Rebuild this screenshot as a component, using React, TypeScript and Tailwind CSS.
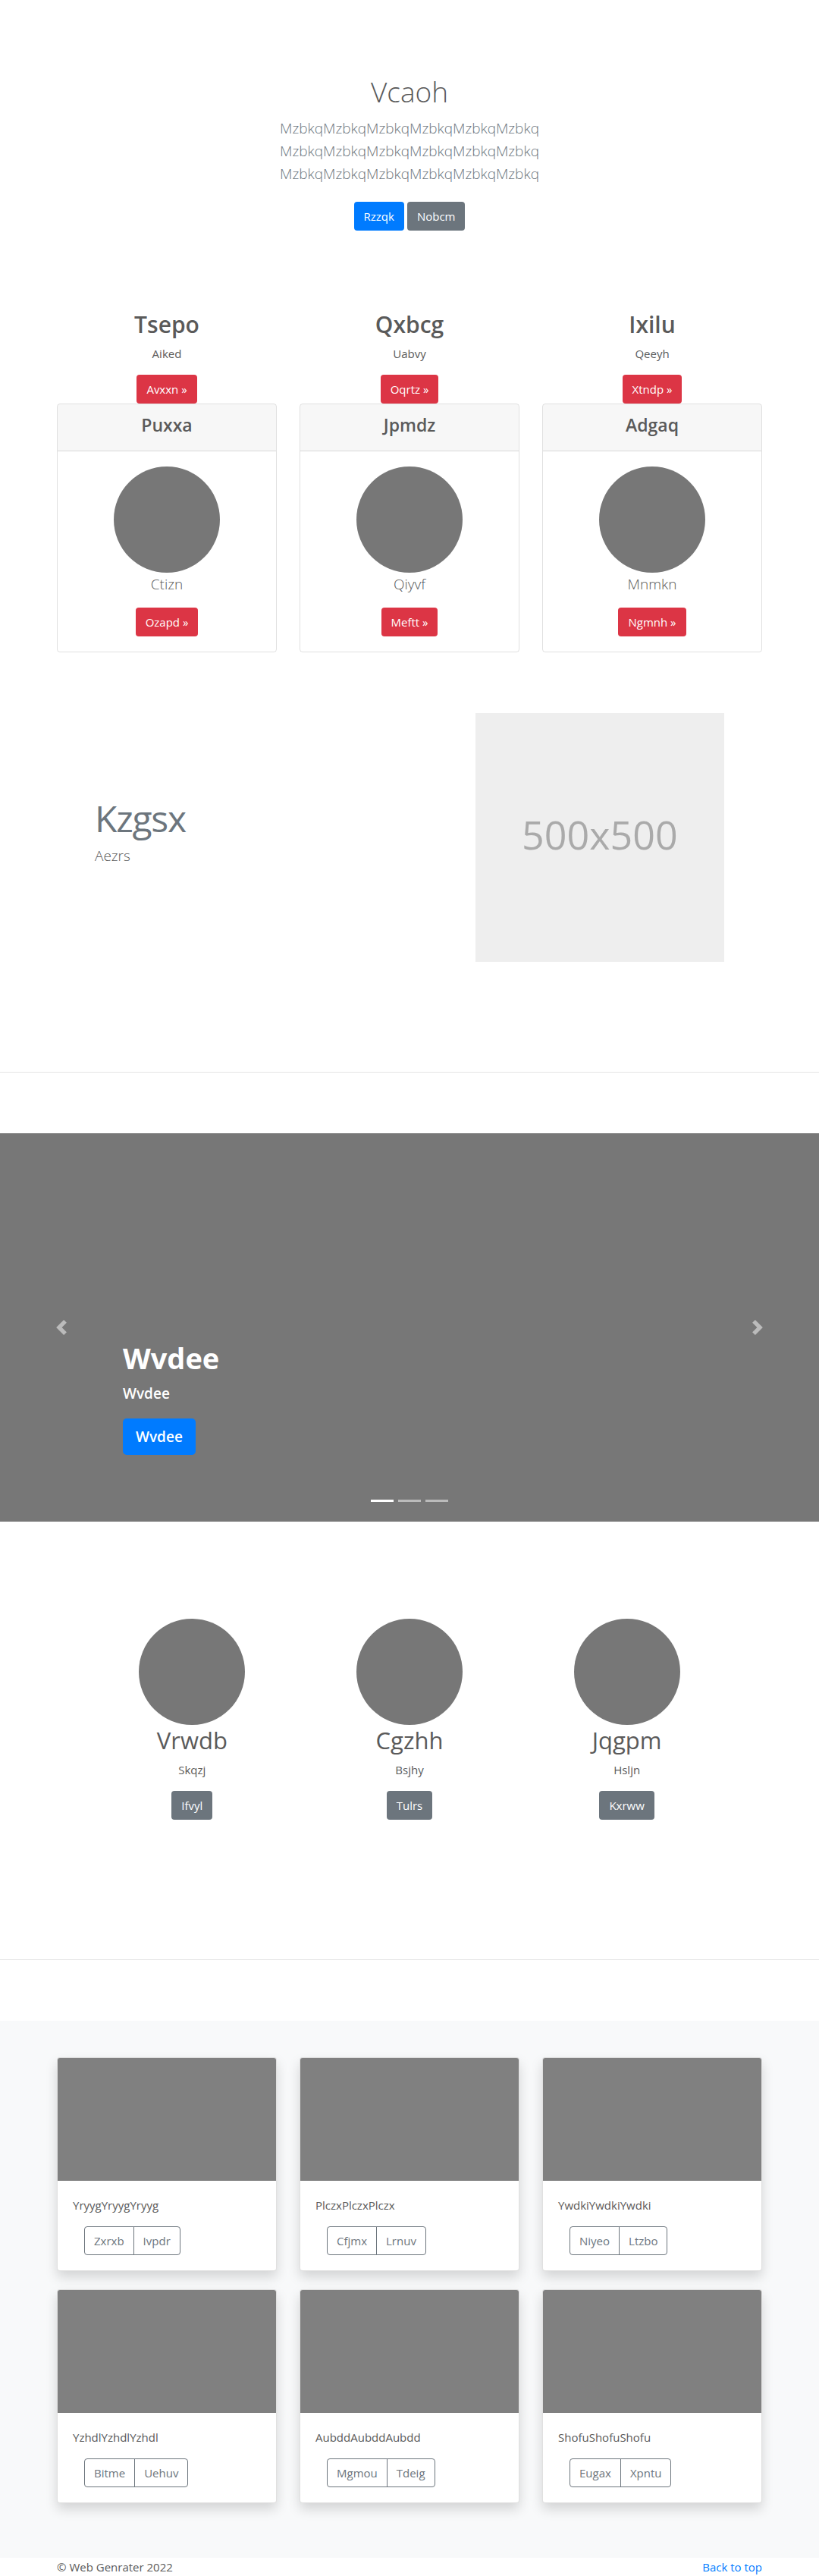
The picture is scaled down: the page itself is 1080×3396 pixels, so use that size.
import React from "react";

const people = [
  { name: "Tsepo", text: "Aiked", action: "Avxxn »" },
  { name: "Qxbcg", text: "Uabvy", action: "Oqrtz »" },
  { name: "Ixilu", text: "Qeeyh", action: "Xtndp »" },
];

const plans = [
  { name: "Puxxa", text: "Ctizn", action: "Ozapd »" },
  { name: "Jpmdz", text: "Qiyvf", action: "Meftt »" },
  { name: "Adgaq", text: "Mnmkn", action: "Ngmnh »" },
];

const features = [
  { name: "Vrwdb", text: "Skqzj", action: "Ifvyl" },
  { name: "Cgzhh", text: "Bsjhy", action: "Tulrs" },
  { name: "Jqgpm", text: "Hsljn", action: "Kxrww" },
];

const albums = [
  { text: "YryygYryygYryyg", left: "Zxrxb", right: "Ivpdr" },
  { text: "PlczxPlczxPlczx", left: "Cfjmx", right: "Lrnuv" },
  { text: "YwdkiYwdkiYwdki", left: "Niyeo", right: "Ltzbo" },
  { text: "YzhdlYzhdlYzhdl", left: "Bitme", right: "Uehuv" },
  { text: "AubddAubddAubdd", left: "Mgmou", right: "Tdeig" },
  { text: "ShofuShofuShofu", left: "Eugax", right: "Xpntu" },
];

const tones = {
  primary: "bg-[#007bff] hover:bg-[#0069d9]",
  secondary: "bg-[#6c757d] hover:bg-[#5a6268]",
  danger: "bg-[#dc3545] hover:bg-[#c82333]",
};

function LinkButton({ tone, children }: { tone: keyof typeof tones; children: React.ReactNode }) {
  return (
    <a href="#" className={`inline-block rounded px-[13px] py-[7px] leading-6 text-white ${tones[tone]}`}>
      {children}
    </a>
  );
}

function Container({ className = "", children }: { className?: string; children: React.ReactNode }) {
  return <div className={`mx-auto w-full max-w-[960px] px-[15px] ${className}`}>{children}</div>;
}

function Divider() {
  return <hr className="my-20 border-t border-black/10" />;
}

function Circle() {
  return <div className="size-[140px] rounded-full bg-[#777]" />;
}

function Hero() {
  const line = "MzbkqMzbkqMzbkqMzbkqMzbkqMzbkq";
  return (
    <section className="flex flex-col items-center px-4 py-24 text-center">
      <h1 className="text-[37px] leading-[50px] font-light">Vcaoh</h1>
      <p className="mt-2 text-[19px] leading-[30px] font-light text-[#6c757d]">
        {line}
        <br />
        {line}
        <br />
        {line}
      </p>
      <div className="mt-[22px] mb-2 flex gap-1">
        <LinkButton tone="primary">Rzzqk</LinkButton>
        <LinkButton tone="secondary">Nobcm</LinkButton>
      </div>
    </section>
  );
}

function People() {
  return (
    <div className="grid grid-cols-1 gap-x-[30px] md:grid-cols-3">
      {people.map((p) => (
        <div key={p.name} className="flex flex-col items-center">
          <h2 className="mb-1.5 text-[30px] leading-[40px] font-semibold">{p.name}</h2>
          <p className="mb-4">{p.text}</p>
          <LinkButton tone="danger">{p.action}</LinkButton>
        </div>
      ))}
    </div>
  );
}

function Plans() {
  return (
    <div className="grid grid-cols-1 gap-x-[30px] md:grid-cols-3">
      {plans.map((p) => (
        <article key={p.name} className="overflow-hidden rounded border border-black/12 text-center">
          <header className="border-b border-black/12 bg-black/3 px-5 py-3">
            <h4 className="mb-1.5 text-[23px] leading-[31px] font-semibold">{p.name}</h4>
          </header>
          <div className="flex flex-col items-center p-5">
            <Circle />
            <p className="mb-4 text-[19px] leading-[30px] font-light">{p.text}</p>
            <LinkButton tone="danger">{p.action}</LinkButton>
          </div>
        </article>
      ))}
    </div>
  );
}

function Featurette() {
  return (
    <Container className="mt-20 pb-[65px]">
      <div className="grid grid-cols-1 items-center gap-[30px] px-[50px] md:grid-cols-12">
        <div className="md:col-span-7">
          <h2 className="mb-2 text-[48px] leading-[52px] tracking-tight text-[#6c757d]">Kzgsx</h2>
          <p className="mb-3 text-[19px] leading-[30px] font-light">Aezrs</p>
        </div>
        <div className="flex aspect-square items-center justify-center bg-[#eee] pb-2 text-[52px] leading-none text-[#aaa] md:col-span-5">
          500x500
        </div>
      </div>
    </Container>
  );
}

function Chevron({ d }: { d: string }) {
  return (
    <svg viewBox="0 0 8 8" className="size-5 fill-white opacity-50" aria-hidden="true">
      <path d={d} />
    </svg>
  );
}

function Carousel() {
  return (
    <section className="relative h-[512px] bg-[#777] text-white" aria-label="Carousel">
      <button type="button" aria-label="Previous" className="absolute inset-y-0 left-0 flex w-[15%] items-center justify-center">
        <Chevron d="M5.25 0l-4 4 4 4 1.5-1.5L4.25 4l2.5-2.5L5.25 0z" />
      </button>
      <button type="button" aria-label="Next" className="absolute inset-y-0 right-0 flex w-[15%] items-center justify-center">
        <Chevron d="M2.75 0l-1.5 1.5L3.75 4l-2.5 2.5L2.75 8l4-4-4-4z" />
      </button>
      <div className="absolute inset-x-[15%] bottom-[88px]">
        <h1 className="mb-2 text-[38px] leading-[48px] font-bold">Wvdee</h1>
        <p className="mb-[18px] text-[19px] leading-[30px] font-semibold">Wvdee</p>
        <a href="#" className="inline-block rounded-[5px] bg-[#007bff] px-[17px] py-[9px] align-top text-[19px] leading-[30px] font-semibold">
          Wvdee
        </a>
      </div>
      <div className="absolute inset-x-[15%] bottom-[26px] flex justify-center gap-[6px]">
        <button type="button" aria-label="Slide 1" className="h-[3px] w-[30px] bg-white" />
        <button type="button" aria-label="Slide 2" className="h-[3px] w-[30px] bg-white/50" />
        <button type="button" aria-label="Slide 3" className="h-[3px] w-[30px] bg-white/50" />
      </div>
    </section>
  );
}

function Features() {
  return (
    <Container className="pt-32 pb-26">
      <div className="grid grid-cols-1 px-[35px] md:grid-cols-3">
        {features.map((f) => (
          <div key={f.name} className="flex flex-col items-center">
            <Circle />
            <h2 className="mb-1.5 text-[31px] leading-[41px]">{f.name}</h2>
            <p className="mb-4">{f.text}</p>
            <LinkButton tone="secondary">{f.action}</LinkButton>
          </div>
        ))}
      </div>
    </Container>
  );
}

function Albums() {
  const outline =
    "border border-[#6c757d] px-3 py-[6px] leading-6 text-[#6c757d] hover:bg-[#6c757d] hover:text-white";
  return (
    <section className="bg-[#f8f9fa] pt-12 pb-[72px]">
      <Container>
        <div className="grid grid-cols-1 gap-x-[30px] gap-y-6 md:grid-cols-3">
          {albums.map((a) => (
            <article
              key={a.text}
              className="overflow-hidden rounded border border-black/12 bg-white shadow-[0_8px_16px_rgba(0,0,0,0.15)]"
            >
              <div className="h-[162px] bg-[#808080]" />
              <div className="p-5">
                <p className="mb-4">{a.text}</p>
                <div className="ml-[15px] flex">
                  <button type="button" className={`rounded-l ${outline}`}>
                    {a.left}
                  </button>
                  <button type="button" className={`-ml-px rounded-r ${outline}`}>
                    {a.right}
                  </button>
                </div>
              </div>
            </article>
          ))}
        </div>
      </Container>
    </section>
  );
}

export default function App() {
  return (
    <div className="bg-white font-['Open_Sans',sans-serif] text-[15px] leading-6 text-[#5a5a5a]">
      <Hero />
      <Container>
        <People />
        <Plans />
      </Container>
      <Featurette />
      <Divider />
      <Carousel />
      <Features />
      <Divider />
      <Albums />
      <footer>
        <Container className="flex justify-between">
          <p>© Web Genrater 2022</p>
          <a href="#" className="text-[#007bff] hover:underline">
            Back to top
          </a>
        </Container>
      </footer>
    </div>
  );
}
